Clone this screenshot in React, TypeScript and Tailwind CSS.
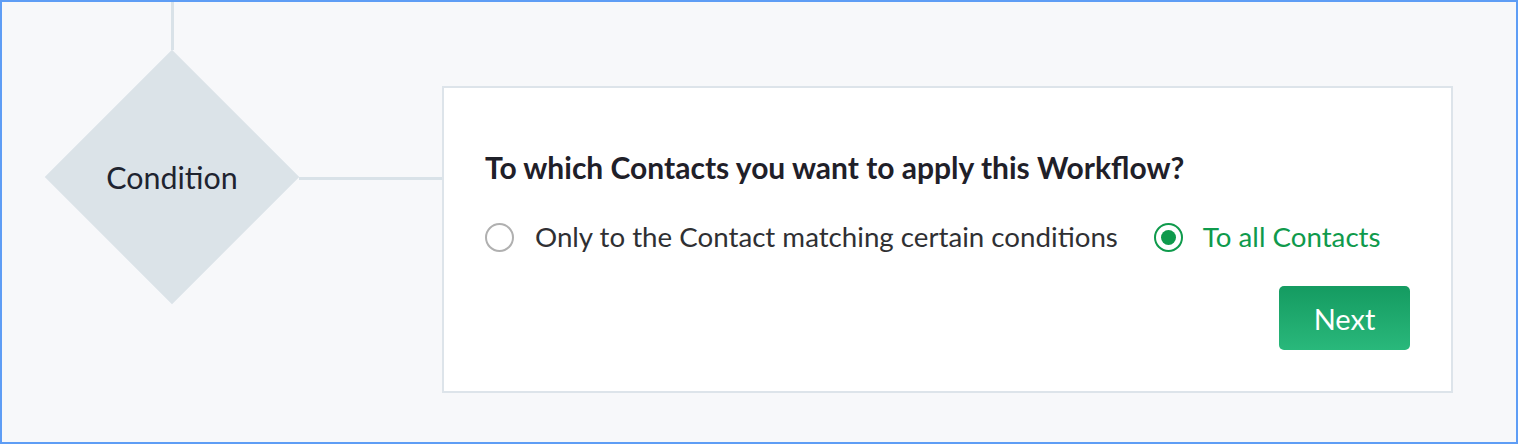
import React, { useState } from "react";

const font = { fontFamily: "Lato, 'Noto Sans', sans-serif" };

const Radio: React.FC<{ checked: boolean }> = ({ checked }) =>
  checked ? (
    <span className="flex items-center justify-center w-[29px] h-[29px] rounded-full border-[2.5px] border-[#0f9a4c] bg-white shrink-0">
      <span className="w-[15px] h-[15px] rounded-full bg-[#0f9a4c]"></span>
    </span>
  ) : (
    <span className="w-[29px] h-[29px] rounded-full border-2 border-[#b0b0b0] bg-white shrink-0"></span>
  );

export default function App() {
  const [all, setAll] = useState(true);

  return (
    <div
      className="w-[1518px] h-[444px] border-2 border-[#5e9df5] bg-[#f7f8fa] flex items-start overflow-hidden"
      style={font}
    >
      <div className="ml-[43px] w-[254px] flex flex-col items-center">
        <div className="w-[3px] h-[48px] bg-[#d9e2e8]"></div>
        <div className="w-[254px] h-[254px] flex items-center justify-center relative">
          <div className="absolute w-[180px] h-[180px] bg-[#dbe3e8] rotate-45"></div>
          <span className="relative text-[30.4px] leading-[36px] text-[#1e2430]">Condition</span>
        </div>
      </div>
      <div className="mt-[175px] w-[143px] h-[3px] bg-[#d9e2e8]"></div>
      <div className="mt-[84px] w-[1011px] h-[307px] border-2 border-[#dde4ea] bg-white pt-[61px] px-[41px]">
        <h2 className="text-[30px] leading-[36px] font-bold text-[#1f2029]">
          To which Contacts you want to apply this Workflow?
        </h2>
        <div className="mt-[34px] flex items-center h-[36px]">
          <label className="flex items-center gap-[21px] cursor-pointer" onClick={() => setAll(false)}>
            <Radio checked={!all} />
            <span className={`text-[27.7px] leading-[36px] ${!all ? "text-[#0f9a4c]" : "text-[#2f3033]"}`}>
              Only to the Contact matching certain conditions
            </span>
          </label>
          <label className="ml-[36px] flex items-center gap-[20px] cursor-pointer" onClick={() => setAll(true)}>
            <Radio checked={all} />
            <span className={`text-[27.7px] leading-[36px] ${all ? "text-[#0f9a4c]" : "text-[#2f3033]"}`}>
              To all Contacts
            </span>
          </label>
        </div>
        <div className="mt-[31px] flex justify-end">
          <button className="w-[131px] h-[64px] rounded-[5px] bg-gradient-to-b from-[#149b61] to-[#29b87b] text-white text-[29px] leading-none">
            Next
          </button>
        </div>
      </div>
    </div>
  );
}
